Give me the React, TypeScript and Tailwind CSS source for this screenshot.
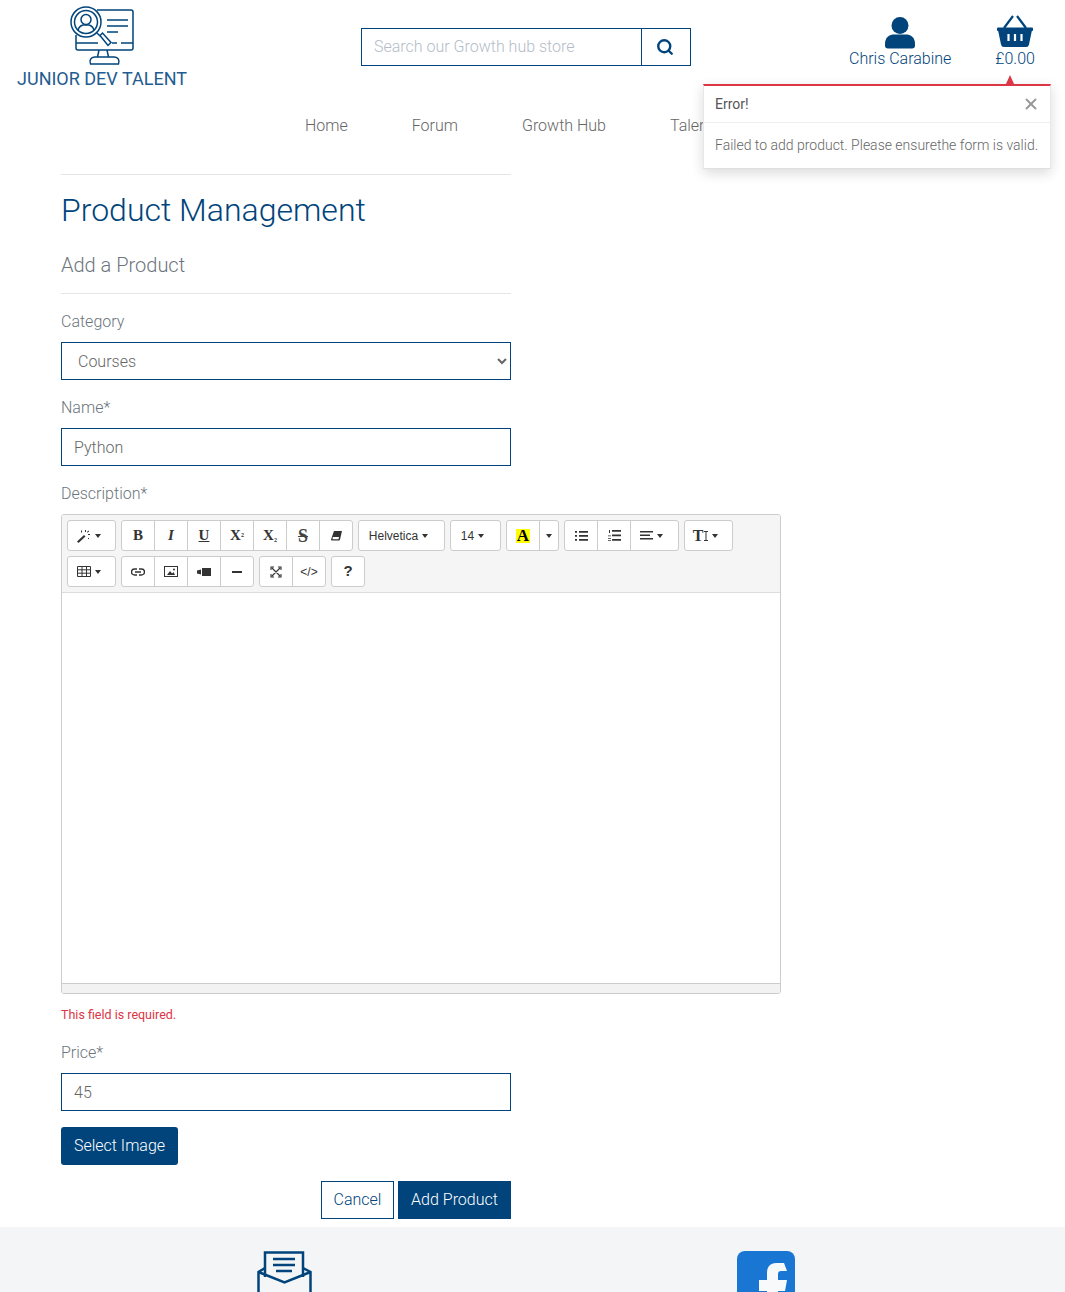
import { Search, X } from "lucide-react";
import { ReactNode } from "react";

function Logo() {
  return (
    <svg width="66" height="60" viewBox="0 0 66 60" fill="none" stroke="#00447b" strokeWidth="1.500">
      {/* monitor */}
      <path d="M28 4h34a2 2 0 0 1 2 2v36a2 2 0 0 1-2 2H9a2 2 0 0 1-2-2V29" />
      <path d="M7 37h22M43 37h5M52 37h12" />
      <path d="M30 44l-1.500 7M38 44l1.500 7" />
      <path d="M21.500 58c-1.500-3.500.5-7 4-7h20c3.500 0 5.500 3.500 4 7z" />
      {/* text lines */}
      <path d="M38 14h21M38 20h21M38 26h11" />
      {/* magnifier */}
      <circle cx="17" cy="16" r="15" />
      <circle cx="17" cy="16" r="11.500" />
      <circle cx="17" cy="13.500" r="5" />
      <path d="M9 24.500c.8-3.500 3-5 5-5.500h6c2 .5 4.200 2 5 5.500" />
      <path d="M28 27l3 3M31 29.500l2.500-2.500 8.500 9.500-3 3z" />
    </svg>
  );
}

function Basket() {
  return (
    <svg width="36" height="34" viewBox="0 0 36 34">
      <path d="M16 1L7 13M20 1l9 12" stroke="#00447b" strokeWidth="2.200" fill="none" />
      <path fill="#00447b" d="M1 12.500h34a1 1 0 0 1 1 1v1.500a1 1 0 0 1-1.200 1L32 29.500a3 3 0 0 1-3 2.500H7a3 3 0 0 1-3-2.500L1.200 16A1 1 0 0 1 0 15v-1.500a1 1 0 0 1 1-1z" />
      <path d="M11.500 19v7M18 19v7M24.500 19v7" stroke="#fff" strokeWidth="2.200" />
    </svg>
  );
}

function Caret() {
  return <span className="inline-block w-0 h-0 border-x-[3.5px] border-x-transparent border-t-[4px] border-t-[#333]" />;
}

function Group({ children }: { children: ReactNode }) {
  return <div className="flex h-[31px] bg-white border border-[#ccc] rounded-[3px] divide-x divide-[#ccc]">{children}</div>;
}

function Btn({ w = "w-[33px]", children }: { w?: string; children: ReactNode }) {
  return <div className={`${w} flex items-center justify-center gap-1 text-[#333]`}>{children}</div>;
}

const serif = "font-['Liberation_Serif',serif] font-bold text-[#333]";

function Toolbar() {
  return (
    <div className="bg-[#f5f5f5] border-b border-[#ddd] h-[78px] pl-[5px] pt-[5px] flex flex-col gap-[5px]">
      <div className="flex gap-[5px]">
        <Group>
          <Btn w="w-[47px] pr-[6px]">
            <svg width="14" height="14" viewBox="0 0 14 14" fill="#333">
              <path d="M0 12.500L7 6l1.500 1.500L1.500 14z" />
              <path d="M8 1h1v2H8zM11 5h2v1h-2zM4 1.500h1v2H4zM11 9h1v1h-1zM11.500 1.500l.7.7-1.500 1.500-.7-.7z" />
            </svg>
            <Caret />
          </Btn>
        </Group>
        <Group>
          <Btn><span className={`${serif} text-[15px]`}>B</span></Btn>
          <Btn><span className={`${serif} italic text-[15px]`}>I</span></Btn>
          <Btn><span className={`${serif} underline text-[15px]`}>U</span></Btn>
          <Btn><span className={`${serif} text-[15px]`}>X<sup className="text-[6px]">2</sup></span></Btn>
          <Btn><span className={`${serif} text-[15px]`}>X<sub className="text-[6px]">2</sub></span></Btn>
          <Btn><span className="font-['Liberation_Serif',serif] font-bold text-[18px] leading-none text-[#444] line-through">S</span></Btn>
          <Btn w="w-[32px]">
            <svg width="11" height="10" viewBox="0 0 11 10" fill="#333">
              <path d="M3 0h8L9 8.500a1 1 0 0 1-1 1H1a1 1 0 0 1-1-1zM1.800 6L1.500 8.200h6L8 6z" fillRule="evenodd" />
            </svg>
          </Btn>
        </Group>
        <Group>
          <Btn w="w-[85px] pr-[6px]">
            <span className="font-['Liberation_Sans',sans-serif] text-[12px] text-[#333]">Helvetica</span>
            <Caret />
          </Btn>
        </Group>
        <Group>
          <Btn w="w-[49px] pr-[6px]">
            <span className="font-['Liberation_Sans',sans-serif] text-[12px] text-[#333]">14</span>
            <Caret />
          </Btn>
        </Group>
        <Group>
          <Btn><span className={`${serif} text-[17px] leading-[14px] bg-[#ff0] px-[1px] text-black`}>A</span></Btn>
          <Btn w="w-[18px]"><Caret /></Btn>
        </Group>
        <Group>
          <Btn>
            <svg width="13" height="10" viewBox="0 0 13 10" fill="#333">
              <path d="M4 0h9v1.800H4zM4 4h9v1.800H4zM4 8h9v1.800H4zM0 0h2v1.800H0zM0 4h2v1.800H0zM0 8h2v1.800H0z" />
            </svg>
          </Btn>
          <Btn>
            <svg width="13" height="11" viewBox="0 0 13 11" fill="#333">
              <path d="M4 0h9v1.800H4zM4 4.500h9v1.800H4zM4 9h9v1.800H4zM1 0h1v3H1zM0 8h3v.8H0zM0 10h3v.8H0zM0 5.500h3v.8H0z" />
            </svg>
          </Btn>
          <Btn w="w-[47px] pr-[6px]">
            <svg width="13" height="9" viewBox="0 0 13 9" fill="#333">
              <path d="M0 0h13v1.500H0zM0 3.500h10v1.500H0zM0 7h13v1.500H0z" />
            </svg>
            <Caret />
          </Btn>
        </Group>
        <Group>
          <Btn w="w-[47px] pr-[6px]">
            <span className={`${serif} text-[16px] leading-none -mr-[3px]`}>T</span>
            <svg width="4" height="10" viewBox="0 0 4 10" fill="#333"><path d="M1.500 0h1v10h-1zM0 0h4v1H0zM0 9h4v1H0z" /></svg>
            <Caret />
          </Btn>
        </Group>
      </div>
      <div className="flex gap-[5px]">
        <Group>
          <Btn w="w-[47px] pr-[6px]">
            <svg width="14" height="11" viewBox="0 0 14 11" fill="none" stroke="#333" strokeWidth="1">
              <path d="M.5.500h13v10H.5zM.5 3.800h13M.5 7.200h13M5 .500v10M9.500.500v10" />
            </svg>
            <Caret />
          </Btn>
        </Group>
        <Group>
          <Btn>
            <svg width="14" height="8" viewBox="0 0 14 8" fill="none" stroke="#333" strokeWidth="1.400">
              <path d="M6 1H3.500a3 3 0 0 0 0 6H6M8 1h2.500a3 3 0 0 1 0 6H8M4 4h6" />
            </svg>
          </Btn>
          <Btn>
            <svg width="14" height="11" viewBox="0 0 14 11" fill="#333">
              <path d="M0 0h14v11H0zM1 1v9h12V1z" fillRule="evenodd" />
              <path d="M3 9l3-4 2 2.500 1.500-1.500L11 9z" />
              <circle cx="10" cy="3.500" r="1" />
            </svg>
          </Btn>
          <Btn>
            <svg width="14" height="8" viewBox="0 0 14 8" fill="#333">
              <path d="M5 0h9v8H5zM0 2.500l4-1v5l-4-1z" />
            </svg>
          </Btn>
          <Btn w="w-[32px]"><span className="w-[10px] h-[2px] bg-[#333]" /></Btn>
        </Group>
        <Group>
          <Btn>
            <svg width="12" height="12" viewBox="0 0 12 12" fill="none" stroke="#333" strokeWidth="1.100">
              <path d="M2 2l8 8M10 2l-8 8M1 4V1h3M8 1h3v3M1 8v3h3M8 11h3V8" />
            </svg>
          </Btn>
          <Btn w="w-[32px]"><span className="font-['Liberation_Sans',sans-serif] text-[12px] text-[#333]">&lt;/&gt;</span></Btn>
        </Group>
        <Group>
          <Btn w="w-[32px]"><span className="font-['Liberation_Sans',sans-serif] font-bold text-[15px] text-[#333]">?</span></Btn>
        </Group>
      </div>
    </div>
  );
}

const field = "block w-[450px] h-[38px] border border-[#00447b] bg-white text-[#666] font-light text-[16px] outline-none";

export default function App() {
  return (
    <div className="relative h-[1292px] overflow-hidden bg-white font-['Roboto',sans-serif]">
      {/* header */}
      <header className="flex items-start pl-[17px]">
        <div className="w-[170px] pt-[6px] flex flex-col items-center">
          <Logo />
          <div className="text-[18px] leading-[21px] mt-[2px] text-[#1f5c8f] whitespace-nowrap">JUNIOR DEV TALENT</div>
        </div>
        <div className="ml-[174px] mt-[28px] w-[330px] h-[38px] flex border border-[#00447b]">
          <input placeholder="Search our Growth hub store" className="flex-1 min-w-0 px-3 font-light text-[16px] outline-none placeholder:text-[#b4bcc8]" />
          <div className="w-[49px] pr-[2px] border-l border-[#00447b] flex items-center justify-center">
            <Search size={18} strokeWidth={3.2} color="#00447b" />
          </div>
        </div>
        <div className="ml-[158px] mt-[17px] flex flex-col items-center text-[#00447b]">
          <svg width="30" height="32" viewBox="0 0 30 32" fill="#00447b">
            <circle cx="15" cy="8.500" r="8.500" />
            <path d="M0 27c0-6 4-9.500 8-9.500h14c4 0 8 3.500 8 9.500v1.500a3 3 0 0 1-3 3H3a3 3 0 0 1-3-3z" />
          </svg>
          <span className="text-[16px] leading-[19px] font-light">Chris Carabine</span>
        </div>
        <div className="ml-[44px] mt-[15px] flex flex-col items-center text-[#00447b]">
          <Basket />
          <span className="text-[16px] leading-[19px] font-light">£0.00</span>
        </div>
      </header>

      {/* nav */}
      <nav className="pl-[305px] mt-[27px] flex gap-[64px] text-[16px] leading-[19px] font-light text-[#666] whitespace-nowrap">
        <span>Home</span>
        <span>Forum</span>
        <span>Growth Hub</span>
        <span>Talent</span>
      </nav>

      {/* form */}
      <main className="px-[61px] mt-[39px] font-light">
        <div className="w-[450px] border-t border-[#e5e5e5] pt-[16px]">
          <h1 className="text-[32px] leading-[38px] font-light text-[#00447b]">Product Management</h1>
          <h2 className="mt-[24px] text-[20px] leading-[24px] text-[#6c757d]">Add a Product</h2>
          <div className="mt-[16px] border-t border-[#e5e5e5]" />
        </div>

        <label className="block mt-[18px] text-[16px] leading-[19px] text-[#6c757d]">Category</label>
        <select defaultValue="Courses" className={`${field} mt-[11px] pl-3 pr-[5px]`}>
          <option>Courses</option>
        </select>

        <label className="block mt-[18px] text-[16px] leading-[19px] text-[#6c757d]">Name*</label>
        <input defaultValue="Python" className={`${field} mt-[11px] px-3`} />

        <label className="block mt-[18px] text-[16px] leading-[19px] text-[#6c757d]">Description*</label>
        <div className="mt-[11px] w-[720px] h-[480px] border border-[#ccc] rounded-[3px] flex flex-col overflow-hidden">
          <Toolbar />
          <div className="flex-1 bg-white" />
          <div className="h-[10px] bg-[#f2f2f2] border-t border-[#ccc]" />
        </div>
        <p className="mt-[13px] text-[12.500px] leading-[16px] font-normal text-[#dc3545]">This field is required.</p>

        <label className="block mt-[20px] text-[16px] leading-[19px] text-[#6c757d]">Price*</label>
        <input defaultValue="45" className={`${field} mt-[11px] px-3`} />

        <button className="block mt-[16px] h-[38px] w-[117px] bg-[#00447b] text-white text-[16px] font-light rounded-[3px]">Select Image</button>

        <div className="mt-[16px] w-[450px] flex justify-end gap-[4px]">
          <button className="h-[38px] w-[73px] border border-[#00447b] text-[#00447b] text-[16px] font-light">Cancel</button>
          <button className="h-[38px] w-[113px] bg-[#00447b] text-white text-[16px] font-light">Add Product</button>
        </div>
      </main>

      {/* footer */}
      <footer className="mt-[8px] h-[80px] bg-[#f4f5f7] flex pt-[24px] overflow-hidden">
        <div className="ml-[257px]">
          <svg width="55" height="60" viewBox="0 0 55 60" fill="none" stroke="#00447b" strokeWidth="2.500">
            <path d="M8 17L1.500 21V60h52V21L46 17" />
            <path d="M1.500 21l26 10.500L53.500 21" />
            <path d="M8 26V1.500h38V26" />
            <path d="M16 8h22M16 14h22M19 20h16" />
          </svg>
        </div>
        <div className="ml-[425px]">
          <svg width="58" height="60" viewBox="0 0 58 60">
            <path fill="#1976d2" d="M8 0h42a8 8 0 0 1 8 8v52H0V8a8 8 0 0 1 8-8z" />
            <path fill="#f8f9fa" d="M47 12h-8c-6 0-9 4-9 10v7h-8v11h8v20h11V40h7l2-11h-9v-6c0-2 1-3 3-3h6z" />
          </svg>
        </div>
      </footer>

      {/* toast */}
      <div className="absolute left-[703px] top-[84px] w-[348px] h-[85px] bg-white border-t-2 border-t-[#dc3545] border-x border-b border-x-[#e8e8e8] border-b-[#e0e0e0] shadow-[0_4px_12px_rgba(0,0,0,0.15)] font-light">
        <span className="absolute left-[302px] -top-[11px] w-0 h-0 border-x-[4px] border-x-transparent border-b-[9px] border-b-[#dc3545]" />
        <div className="h-[37px] flex items-center justify-between pl-[11px] pr-[10px] border-b border-[#eee]">
          <span className="text-[14px] font-normal text-[#555]">Error!</span>
          <X size={18} strokeWidth={2.600} color="#999" />
        </div>
        <p className="pl-[11px] mt-[14px] text-[14px] leading-[17px] text-[#666] whitespace-nowrap">Failed to add product. Please ensurethe form is valid.</p>
      </div>
    </div>
  );
}
